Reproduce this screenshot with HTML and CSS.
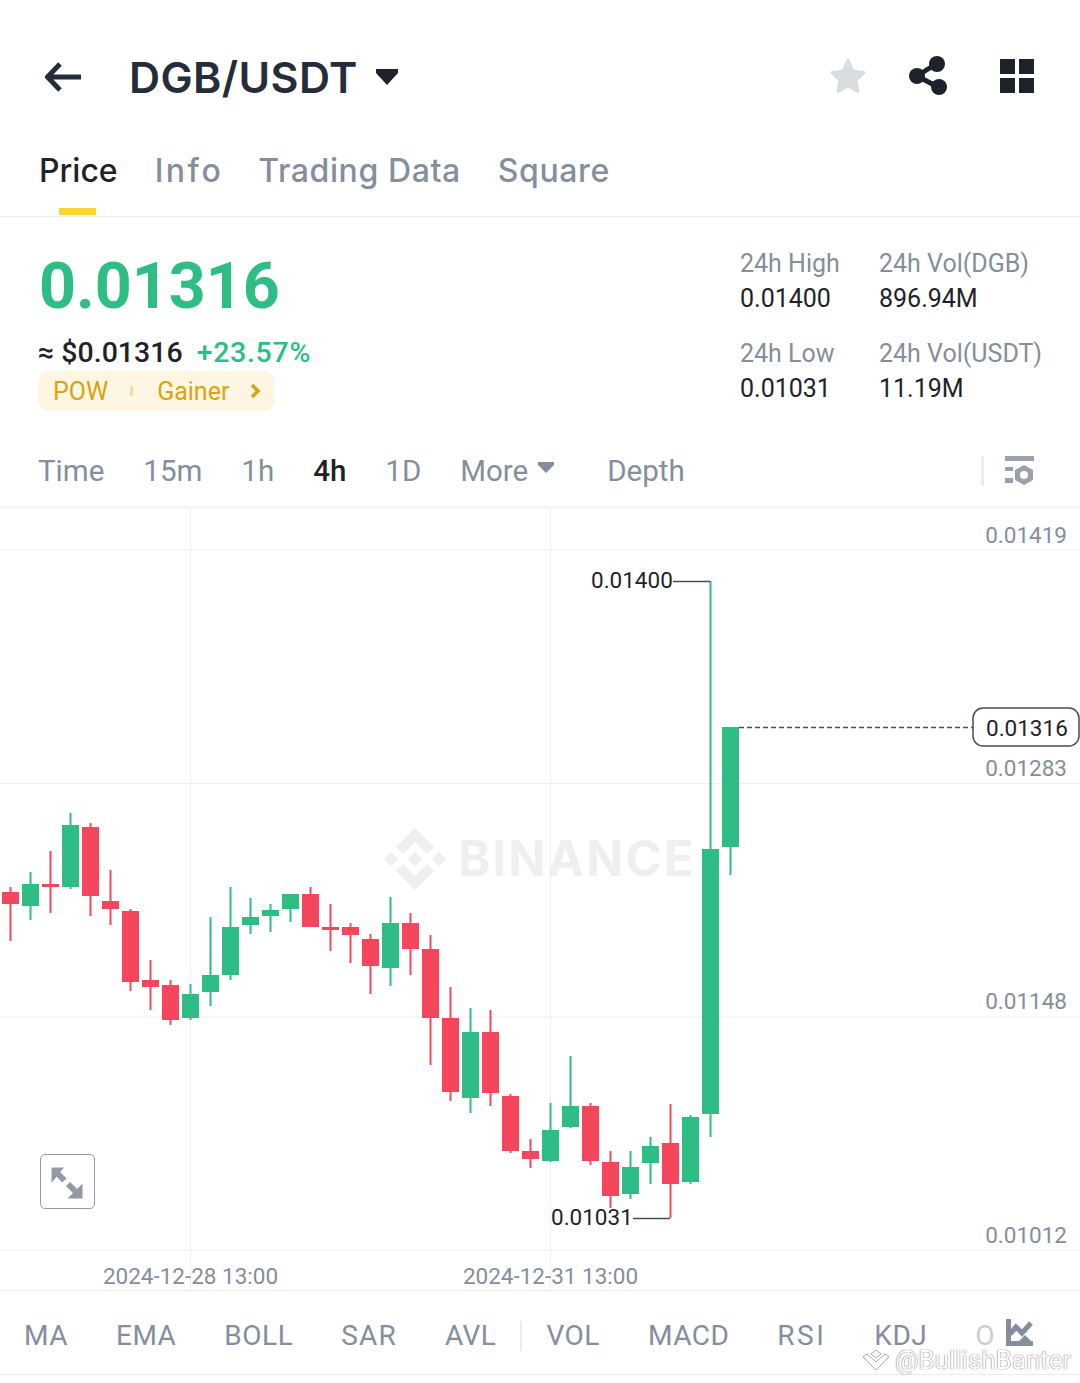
FILE: index.html
```html
<!DOCTYPE html>
<html lang="en">
<head>
  <meta charset="UTF-8">
  <title>DGB/USDT</title>
  <link rel="stylesheet" href="styles.css">
</head>
<body>
<!-- top bar -->
<header class="topbar">
  <svg class="icon-back" width="36" height="32" viewBox="0 0 36 32"><path d="M36 16H3M15 3 2.500 16 15 29"/></svg>
  <h1 class="pair">DGB/USDT</h1>
  <svg class="icon-caret" width="24" height="18" viewBox="0 0 24 18"><path d="M1 1h22v4L12 17 1 5z"/></svg>
  <div class="topbar-actions">
    <svg class="icon-star" width="38" height="38" viewBox="0 0 38 38"><path d="M19 3l5 11 11 1.500-8 8 2 11-10-5.500-10 5.500 2-11-8-8 11-1.500z"/></svg>
    <svg class="icon-share" width="38" height="38" viewBox="0 0 38 38"><path d="M26 7 7 19l21 11"/><circle cx="27" cy="7" r="8"/><circle cx="7" cy="19" r="8"/><circle cx="29" cy="30" r="8"/></svg>
    <svg class="icon-grid" width="34" height="34" viewBox="0 0 34 34"><path d="M0 0h15v15H0zM19 0h15v15H19zM0 19h15v15H0zM19 19h15v15H19z"/></svg>
  </div>
</header>

<!-- page tabs -->
<nav class="tabs">
  <a class="tab tab-active">Price</a>
  <a class="tab tab-info">Info</a>
  <a class="tab">Trading Data</a>
  <a class="tab">Square</a>
</nav>

<!-- price summary -->
<section class="summary">
  <div class="summary-left">
    <div class="last-price">0.01316</div>
    <div class="sub-price"><span>≈ $0.01316</span><span class="change">+23.57%</span></div>
    <div class="tags">
      <span>POW</span>
      <i class="tag-sep"></i>
      <span>Gainer</span>
      <svg width="10" height="16" viewBox="0 0 10 16"><path d="M2 2l6 6-6 6"/></svg>
    </div>
  </div>
  <dl class="stats">
    <div><dt>24h High</dt><dd>0.01400</dd></div>
    <div><dt>24h Vol(DGB)</dt><dd>896.94M</dd></div>
    <div><dt>24h Low</dt><dd>0.01031</dd></div>
    <div><dt>24h Vol(USDT)</dt><dd>11.19M</dd></div>
  </dl>
</section>

<!-- interval bar -->
<nav class="intervals">
  <a>Time</a>
  <a>15m</a>
  <a>1h</a>
  <a class="interval-active">4h</a>
  <a>1D</a>
  <a class="interval-more">More<svg width="16" height="12" viewBox="0 0 16 12"><path d="M0 0h16v3l-8 8-8-8z"/></svg></a>
  <a class="interval-depth">Depth</a>
  <i class="intervals-sep"></i>
  <svg class="icon-settings" width="30" height="30" viewBox="0 0 30 30"><path d="M0 0h29v5H0zM0 11h8v4H0zM0 22h8v5H0z"/><path fill-rule="evenodd" d="M19 9l9 5v10l-9 5-9-5V14zM19 15a4 4 0 1 0 0 8 4 4 0 0 0 0-8z"/></svg>
</nav>

<!-- candle chart, drawn in page coordinates -->
<main class="chart">
  <svg class="chart-canvas" width="1080" height="781" viewBox="0 509 1080 781">
    <g class="grid">
      <path d="M0 550H1080M0 783.500H1080M0 1017H1080M0 1250H1080M190.500 509V1290M550.500 509V1290"/>
    </g>
    <g class="logo-mark" transform="translate(384 828) scale(.49)">
      <path d="M38.730 53.200 63.320 28.620 87.920 53.220 102.220 38.910 63.320 0 24.430 38.900z"/>
      <path d="M0 63.310 14.300 49 28.610 63.310 14.300 77.610z"/>
      <path d="M38.730 73.410 63.320 98 87.920 73.400 102.230 87.690 63.320 126.600 24.410 87.720V87.690z"/>
      <path d="M98 63.310 112.300 49 126.610 63.300 112.300 77.620z"/>
      <path d="M77.830 63.300 63.320 48.780 48.810 63.300 63.320 77.810z"/>
    </g>
    <text class="logo-word" x="458" y="876">BINANCE</text>

    <path class="down" d="M9.500 887h2v54h-2zM2 892h17v12H2z"/>
    <path class="up" d="M29.500 872h2v48h-2zM22 884h17v22H22z"/>
    <path class="down" d="M49.500 851h2v62h-2zM42 884h17v3H42z"/>
    <path class="up" d="M69.500 813h2v76h-2zM62 825h17v62H62z"/>
    <path class="down" d="M89.500 823h2v93h-2zM82 827h17v69H82z"/>
    <path class="down" d="M109.500 870h2v55h-2zM102 901h17v8h-17z"/>
    <path class="down" d="M129.500 909h2v82h-2zM122 911h17v71h-17z"/>
    <path class="down" d="M149.500 960h2v50h-2zM142 980h17v7h-17z"/>
    <path class="down" d="M169.500 980h2v45h-2zM162 985h17v35h-17z"/>
    <path class="up" d="M189.500 984h2v36h-2zM182 994h17v24h-17z"/>
    <path class="up" d="M209.500 917h2v89h-2zM202 975h17v17h-17z"/>
    <path class="up" d="M229.500 887h2v93h-2zM222 927h17v48h-17z"/>
    <path class="up" d="M249.500 898h2v36h-2zM242 917h17v8h-17z"/>
    <path class="up" d="M269.500 904h2v28h-2zM262 910h17v6h-17z"/>
    <path class="up" d="M289.500 894h2v28h-2zM282 894h17v15h-17z"/>
    <path class="down" d="M309.500 887h2v40h-2zM302 894h17v33h-17z"/>
    <path class="down" d="M329.500 904h2v47h-2zM322 927h17v3h-17z"/>
    <path class="down" d="M349.500 923h2v40h-2zM342 927h17v8h-17z"/>
    <path class="down" d="M369.500 934h2v60h-2zM362 939h17v27h-17z"/>
    <path class="up" d="M389.500 897h2v89h-2zM382 923h17v45h-17z"/>
    <path class="down" d="M409.500 913h2v62h-2zM402 923h17v26h-17z"/>
    <path class="down" d="M429.500 935h2v130h-2zM422 949h17v69h-17z"/>
    <path class="down" d="M449.500 987h2v114h-2zM442 1018h17v74h-17z"/>
    <path class="up" d="M469.500 1008h2v105h-2zM462 1032h17v66h-17z"/>
    <path class="down" d="M489.500 1010h2v96h-2zM482 1032h17v61h-17z"/>
    <path class="down" d="M509.500 1094h2v59h-2zM502 1096h17v55h-17z"/>
    <path class="down" d="M529.500 1139h2v29h-2zM522 1151h17v8h-17z"/>
    <path class="up" d="M549.500 1103h2v59h-2zM542 1130h17v31h-17z"/>
    <path class="up" d="M569.500 1056h2v72h-2zM562 1106h17v21h-17z"/>
    <path class="down" d="M589.500 1103h2v62h-2zM582 1106h17v55h-17z"/>
    <path class="down" d="M609.500 1151h2v57h-2zM602 1162h17v34h-17z"/>
    <path class="up" d="M629.500 1151h2v48h-2zM622 1167h17v27h-17z"/>
    <path class="up" d="M649.500 1137h2v47h-2zM642 1146h17v17h-17z"/>
    <path class="down" d="M669.500 1104h2v114h-2zM662 1143h17v41h-17z"/>
    <path class="up" d="M689.500 1115h2v69h-2zM682 1117h17v65h-17z"/>
    <path class="up" d="M709.500 581h2v556h-2zM702 849h17v265h-17z"/>
    <path class="up" d="M729.500 727h2v148h-2zM722 727h17v120h-17z"/>

    <path class="callout" d="M673 581.500H710M633 1218.500H670"/>
    <text class="chart-text" x="591" y="588">0.01400</text>
    <text class="chart-text" x="551" y="1225">0.01031</text>

    <path class="last-line" d="M739 727.500H973"/>
    <rect class="last-pill" x="973" y="708" width="106" height="38" rx="10"/>
    <text class="chart-text" x="986" y="736">0.01316</text>

    <g class="axis-text">
      <text x="1067" y="543">0.01419</text>
      <text x="1067" y="776">0.01283</text>
      <text x="1067" y="1009">0.01148</text>
      <text x="1067" y="1243">0.01012</text>
    </g>
    <g class="date-text">
      <text x="190.500" y="1284">2024-12-28 13:00</text>
      <text x="550.500" y="1284">2024-12-31 13:00</text>
    </g>
  </svg>
  <button class="expand" type="button">
    <svg width="52" height="52" viewBox="0 0 52 52"><path class="expand-head" d="M10.500 11.500H23L10.500 27zM41.500 27.500V42.500H26.500z"/><path class="expand-shaft" d="M14 15l9.500 9.500M27 28l9 9"/></svg>
  </button>
</main>

<!-- indicators -->
<nav class="indicators">
  <a>MA</a>
  <a>EMA</a>
  <a>BOLL</a>
  <a class="ind-sar">SAR</a>
  <a>AVL</a>
  <i class="indicators-sep"></i>
  <a>VOL</a>
  <a>MACD</a>
  <a class="ind-rsi">RSI</a>
  <a>KDJ</a>
  <a class="indicator-fade">O</a>
  <svg class="icon-indicator" width="27" height="28" viewBox="0 0 27 28"><path class="solid" d="M0 0h5v22h22v5H0zM13 22l6-6 6 6z"/><path class="zigzag" d="M4 15l6-7 6 6 9-10"/></svg>
</nav>

<!-- repost watermark -->
<div class="repost">
  <svg width="28" height="22" viewBox="0 0 28 22"><path d="M14 1l5 4-5 4-5-4zM1 8l4-3 9 8 9-8 4 3-13 13z"/></svg>
  <span>@BullishBanter</span>
</div>
</body>
</html>
```

FILE: styles.css
```css
/* page */
body {
  margin: 0;
  height: 1383px;
  overflow: hidden;
  position: relative;
  background: #fff;
  color: #1e2329;
  font-family: Inter, "Noto Sans", sans-serif;
}

a {
  display: block;
}

/* top bar */
.topbar {
  height: 132px;
  padding: 22px 46px 0 45px;
  box-sizing: border-box;
  display: flex;
  align-items: center;
}

.icon-back {
  fill: none;
  stroke: #262d3a;
  stroke-width: 5;
}

.pair {
  margin: 0 17px 0 48px;
  font-size: 43px;
  font-weight: 600;
  letter-spacing: .4px;
  color: #262d3a;
}

.icon-caret {
  fill: #1e2329;
  margin-top: -1px;
}

.topbar-actions {
  margin-left: auto;
  margin-top: -2px;
  display: flex;
  align-items: center;
  gap: 43px;
}

.icon-star {
  fill: #d9dce0;
  stroke: #d9dce0;
  stroke-width: 3;
  stroke-linejoin: round;
}

.icon-share {
  fill: #1e2329;
  stroke: none;
  overflow: visible;
}

.icon-share path {
  fill: none;
  stroke: #1e2329;
  stroke-width: 5;
}

.icon-grid {
  fill: #1e2329;
  margin-left: 9px;
}

/* page tabs */
.tabs {
  height: 85px;
  padding-left: 39px;
  box-sizing: border-box;
  display: flex;
  gap: 37px;
  border-bottom: 1px solid #eaecef;
}

.tab {
  position: relative;
  font-size: 32px;
  line-height: 78px;
  font-weight: 500;
  letter-spacing: .6px;
  color: #848e9c;
}

.tab-info {
  letter-spacing: 2.500px;
  margin-right: -2px;
}

.tab-active {
  color: #1e2329;
  letter-spacing: 0;
}

.tab-active::after {
  content: "";
  position: absolute;
  left: 20px;
  bottom: 1px;
  width: 37px;
  height: 7px;
  background: #fcd535;
}

/* price summary */
.summary {
  height: 223px;
  padding: 0 39px 0 38px;
  display: flex;
  justify-content: space-between;
}

.last-price {
  margin: 30px 0 0 1px;
  font-family: Roboto, sans-serif;
  font-size: 64.500px;
  line-height: 78px;
  font-weight: 700;
  color: #2ebd85;
}

.sub-price {
  margin-top: 10px;
  display: flex;
  gap: 14px;
  font-family: Roboto, sans-serif;
  font-size: 28.500px;
  line-height: 36px;
  font-weight: 500;
}

.change {
  letter-spacing: .7px;
  color: #2ebd85;
}

.tags {
  margin-top: 0;
  width: 237px;
  height: 40px;
  padding: 0 15px;
  box-sizing: border-box;
  display: flex;
  align-items: center;
  border-radius: 12px;
  background: #fdf6e3;
  color: #dba30f;
  font-family: Roboto, sans-serif;
  font-size: 25px;
}

.tag-sep {
  width: 3px;
  height: 10px;
  margin: 0 24px 0 22px;
  background: #f5dfa0;
}

.tags svg {
  margin-left: auto;
  fill: none;
  stroke: #dba30f;
  stroke-width: 3.500;
}

.stats {
  margin: 0;
  width: 301px;
  display: grid;
  grid-template-columns: 139px auto;
  grid-auto-rows: 90px;
  padding-top: 29px;
  font-family: Roboto, sans-serif;
  white-space: nowrap;
}

.stats dt {
  font-size: 25px;
  line-height: 36px;
  color: #848e9c;
}

.stats dd {
  margin: 0;
  font-size: 25px;
  line-height: 34px;
  color: #1e2329;
}

/* interval bar */
.intervals {
  height: 69px;
  padding: 0 45px 5px 38px;
  box-sizing: border-box;
  display: flex;
  align-items: center;
  gap: 39px;
  border-bottom: 3px solid #f5f5f5;
  font-family: Roboto, sans-serif;
  font-size: 29.500px;
  color: #848e9c;
}

.interval-active {
  color: #1e2329;
  font-weight: 500;
}

.interval-more {
  display: flex;
  align-items: center;
  gap: 10px;
  margin-right: 14px;
}

.interval-more svg {
  fill: #848e9c;
  margin-top: -6px;
}

.intervals-sep {
  width: 3px;
  height: 30px;
  margin-left: auto;
  margin-right: -18px;
  background: #eaecef;
}

.icon-settings {
  fill: #9aa1ad;
}

/* chart */
.chart {
  height: 781px;
  position: relative;
}

.chart-canvas {
  display: block;
}

.grid path {
  fill: none;
  stroke: #eeeff1;
  stroke-width: 1;
}

.logo-mark {
  fill: #eeeff1;
}

.logo-word {
  font-size: 49px;
  font-weight: 700;
  letter-spacing: 2px;
  fill: #eeeff1;
}

.up {
  fill: #2ebd85;
}

.down {
  fill: #f6465d;
}

.callout {
  fill: none;
  stroke: #474d57;
  stroke-width: 1.500;
}

.last-line {
  fill: none;
  stroke: #474d57;
  stroke-width: 1.500;
  stroke-dasharray: 5 3;
}

.last-pill {
  fill: #fff;
  stroke: #474d57;
  stroke-width: 1.500;
}

.chart-text {
  font-family: Roboto, sans-serif;
  font-size: 22.500px;
  fill: #1e2329;
}

.axis-text,
.date-text {
  font-family: Roboto, sans-serif;
  font-size: 22.500px;
  fill: #848e9c;
}

.axis-text {
  text-anchor: end;
}

.date-text {
  text-anchor: middle;
}

.expand {
  position: absolute;
  left: 40px;
  top: 645px;
  width: 55px;
  height: 55px;
  padding: 0;
  box-sizing: border-box;
  background: #fff;
  border: 1.500px solid #929aa5;
  border-radius: 5px;
}

.expand svg {
  display: block;
}

.expand-head {
  fill: #929aa5;
}

.expand-shaft {
  fill: none;
  stroke: #929aa5;
  stroke-width: 6;
}

/* indicators */
.indicators {
  height: 85px;
  padding: 6px 47px 0 24px;
  box-sizing: border-box;
  display: flex;
  align-items: center;
  gap: 48px;
  border-top: 1px solid #eaecef;
  border-bottom: 1px solid #eaecef;
  font-family: Roboto, sans-serif;
  font-size: 28px;
  letter-spacing: .5px;
  color: #848e9c;
}

.ind-sar {
  letter-spacing: 1.200px;
}

.ind-rsi {
  letter-spacing: 2.500px;
}

.indicators-sep {
  flex-shrink: 0;
  width: 2px;
  height: 30px;
  margin: 0 -24px;
  background: #eaecef;
}

.indicator-fade {
  color: #c9ced5;
}

.icon-indicator {
  flex-shrink: 0;
  margin-left: -37px;
  margin-top: -6px;
}

.icon-indicator .solid {
  fill: #848e9c;
}

.icon-indicator .zigzag {
  fill: none;
  stroke: #848e9c;
  stroke-width: 5;
}

/* repost watermark lies over the indicator bar */
.repost {
  position: absolute;
  left: 862px;
  top: 1345px;
  display: flex;
  align-items: center;
  gap: 5px;
  font-family: Roboto, sans-serif;
  font-size: 26px;
  color: #fff;
  text-shadow: 0 0 1px #777, 0 0 1px #777;
}

.repost svg {
  fill: #fff;
  stroke: #aaa;
  stroke-width: 1;
}
```
